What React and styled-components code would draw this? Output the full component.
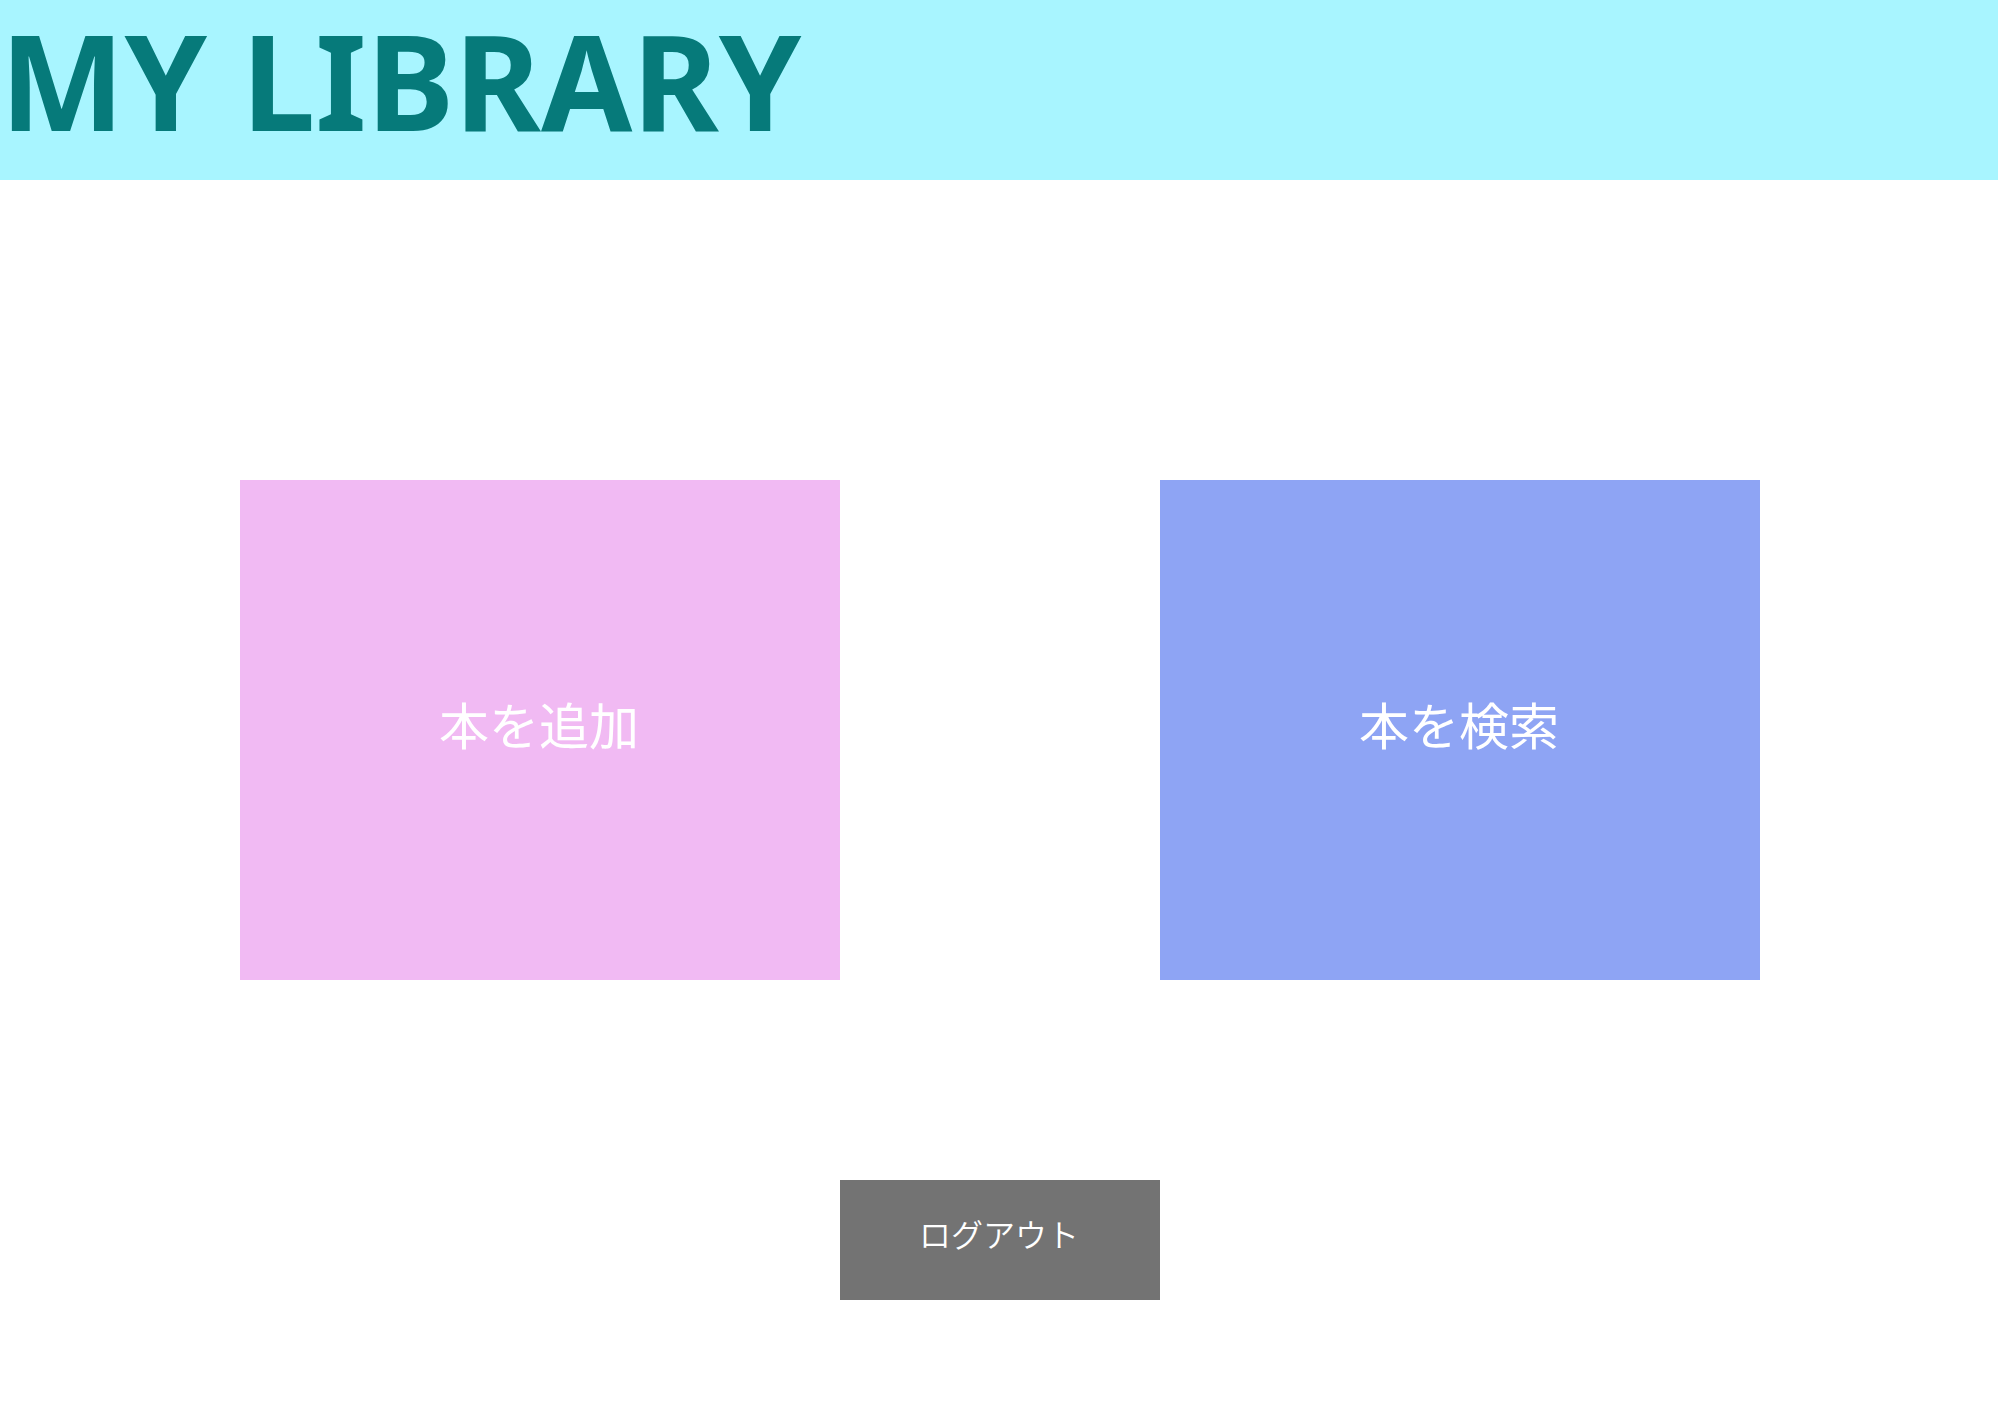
import React from "react";
import styled, { createGlobalStyle } from "styled-components";

const GlobalStyle = createGlobalStyle`
  * { box-sizing: border-box; }
  body {
    margin: 0;
    background: #ffffff;
    font-family: "Noto Sans", "Noto Sans CJK JP", sans-serif;
  }
`;

const Header = styled.header`
  min-height: 180px;
  background: #a8f5ff;
`;

const Title = styled.h1`
  margin: 0;
  color: #067a7a;
  font-size: 132px;
  font-weight: 700;
  line-height: 160px;
`;

const Menu = styled.main`
  display: grid;
  grid-template-columns: minmax(0, 600px) minmax(0, 320px) minmax(0, 600px);
  grid-template-rows: 500px 120px;
  row-gap: 200px;
  padding: 300px 0 0 240px;
`;

const MenuButton = styled.button`
  grid-column: ${({ $column }) => $column};
  border: 0;
  border-radius: 0;
  padding: 0 2px 14px 0;
  background: ${({ $color }) => $color};
  color: #ffffff;
  font-family: "Noto Sans CJK JP", sans-serif;
  font-size: ${({ $small }) => ($small ? 32 : 50)}px;
  font-weight: ${({ $small }) => ($small ? 350 : 400)};
  line-height: ${({ $small }) => ($small ? 48 : 72)}px;
  cursor: pointer;
`;

export default function App() {
  return (
    <>
      <GlobalStyle />
      <Header>
        <Title>MY LIBRARY</Title>
      </Header>
      <Menu>
        <MenuButton type="button" $column={1} $color="#f1baf3">本を追加</MenuButton>
        <MenuButton type="button" $column={3} $color="#8ea4f4">本を検索</MenuButton>
        <MenuButton type="button" $column={2} $color="#737373" $small>ログアウト</MenuButton>
      </Menu>
    </>
  );
}
